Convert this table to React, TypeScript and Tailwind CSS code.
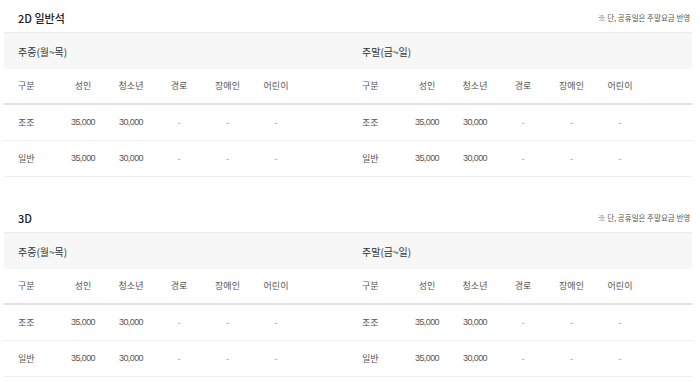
const KR = "font-['Noto_Sans_CJK_KR','Noto_Sans',sans-serif]";

type Row = { label: string; adult: string; youth: string };

const rows: Row[] = [
  { label: "조조", adult: "35,000", youth: "30,000" },
  { label: "일반", adult: "35,000", youth: "30,000" },
];

const heads = ["성인", "청소년", "경로", "장애인", "어린이"];
const cols = "grid grid-cols-[55px_48px_48px_48px_49px_48px_1fr] items-center";

function Half({ title }: { title: string }) {
  return (
    <div className="w-[344px]">
      <div className="flex h-[37px] items-center border-t border-[#ececec] bg-[#f7f7f7] pl-[14px] text-[10px] text-[#333]">
        {title}
      </div>
      <div className={`${cols} h-[36px] border-b-2 border-[#e2e2e2] text-[9px] text-[#555]`}>
        <span className="pl-[14px]">구분</span>
        {heads.map((h) => (
          <span key={h} className="text-center">
            {h}
          </span>
        ))}
        <span />
      </div>
      {rows.map((r) => (
        <div key={r.label} className={`${cols} h-[36px] border-b border-[#efefef]`}>
          <span className="pl-[14px] text-[9px] text-[#555]">{r.label}</span>
          <span className="text-center font-['Liberation_Sans',sans-serif] text-[9px] tracking-[-0.6px] text-[#555]">
            {r.adult}
          </span>
          <span className="text-center font-['Liberation_Sans',sans-serif] text-[9px] tracking-[-0.6px] text-[#555]">
            {r.youth}
          </span>
          {[0, 1, 2].map((i) => (
            <span key={i} className="text-center text-[9px] text-[#999]">
              -
            </span>
          ))}
          <span />
        </div>
      ))}
    </div>
  );
}

function Section({ name }: { name: string }) {
  return (
    <section>
      <div className="flex h-[32px] items-start pt-[10px]">
        <h2 className="flex-1 pl-[14px] text-[11px] font-medium leading-[16px] text-[#222]">{name}</h2>
        <p className="w-[94px] shrink-0 overflow-hidden whitespace-nowrap pt-[2px] text-[7.5px] leading-[12px] text-[#555]">
          ※ 단, 공휴일은 주말요금 반영
        </p>
      </div>
      <div className="flex">
        <Half title="주중(월~목)" />
        <Half title="주말(금~일)" />
      </div>
    </section>
  );
}

export default function App() {
  return (
    <div className={`${KR} h-[382px] w-[700px] overflow-hidden bg-white`}>
      <div className="ml-[4px] flex w-[688px] flex-col gap-[23px]">
        <Section name="2D 일반석" />
        <Section name="3D" />
      </div>
    </div>
  );
}
